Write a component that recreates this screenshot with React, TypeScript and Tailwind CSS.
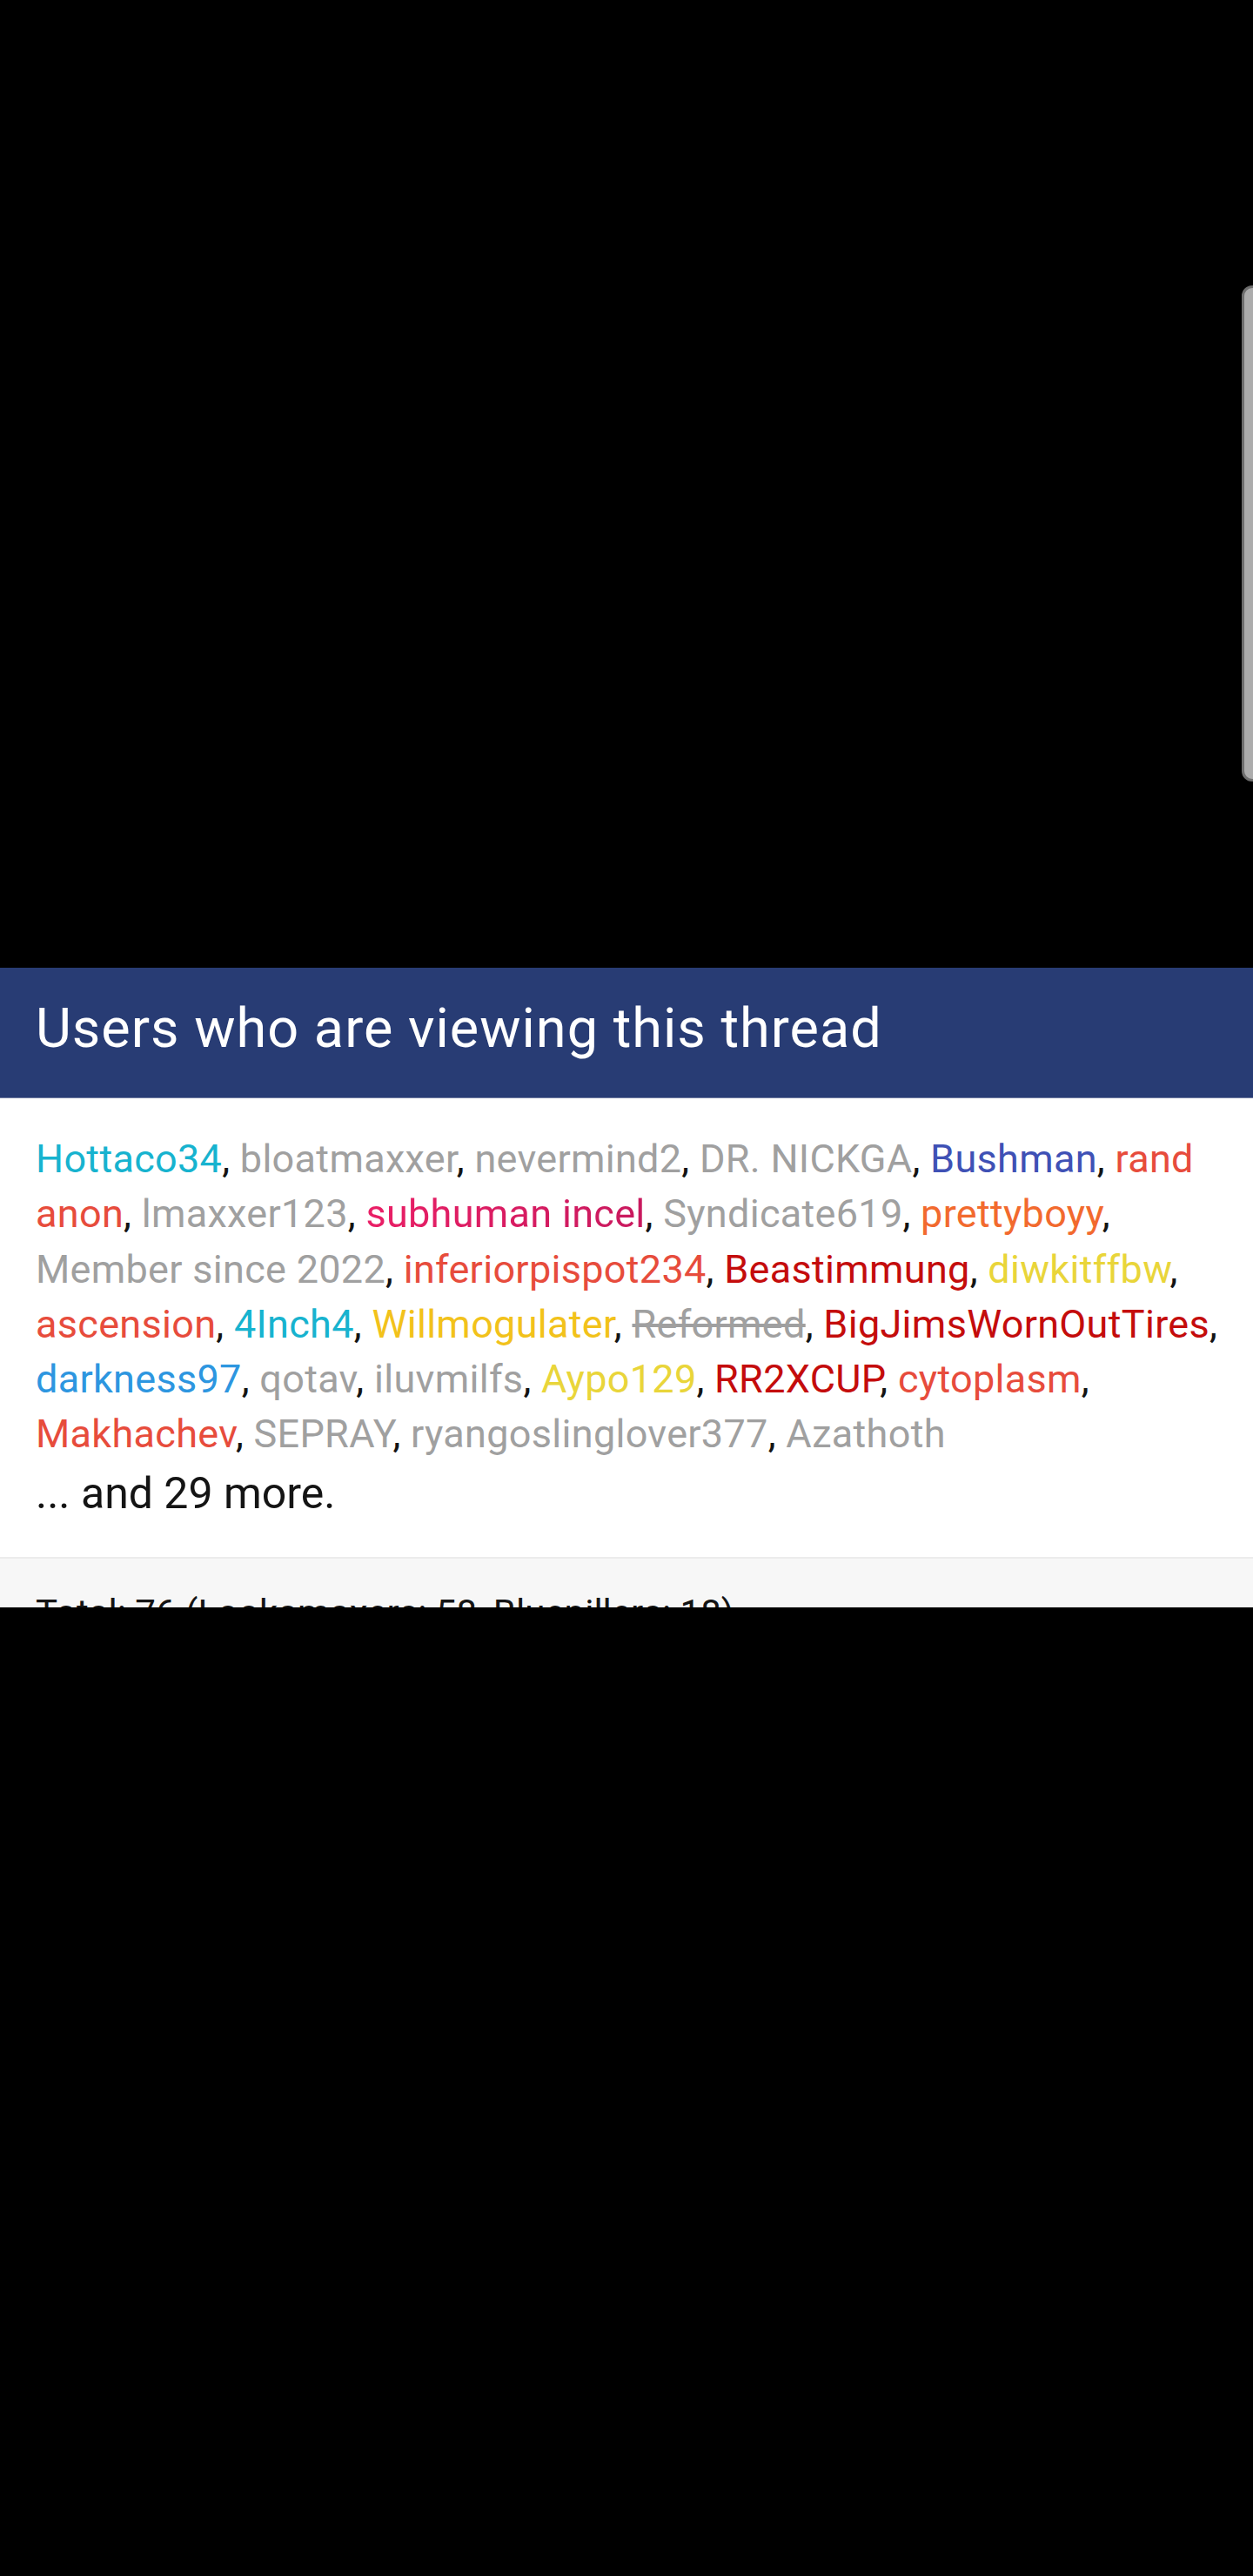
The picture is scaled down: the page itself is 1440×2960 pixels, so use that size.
import React from "react";

type U = { n: string; c: string; s?: boolean; g?: boolean };

const users: U[] = [
  { n: "Hottaco34", c: "text-[#17b3cf]" },
  { n: "bloatmaxxer", c: "text-[#a0a0a0]" },
  { n: "nevermind2", c: "text-[#a0a0a0]" },
  { n: "DR. NICKGA", c: "text-[#a0a0a0]" },
  { n: "Bushman", c: "text-[#3f51b5]" },
  { n: "rand anon", c: "text-[#e74c3c]" },
  { n: "lmaxxer123", c: "text-[#a0a0a0]" },
  { n: "subhuman incel", c: "", g: true },
  { n: "Syndicate619", c: "text-[#a0a0a0]" },
  { n: "prettyboyy", c: "text-[#f26a2e]" },
  { n: "Member since 2022", c: "text-[#a0a0a0]" },
  { n: "inferiorpispot234", c: "text-[#e74c3c]" },
  { n: "Beastimmung", c: "text-[#c40c0c]" },
  { n: "diwkitffbw", c: "text-[#e9d53a]" },
  { n: "ascension", c: "text-[#e74c3c]" },
  { n: "4Inch4", c: "text-[#17b3cf]" },
  { n: "Willmogulater", c: "text-[#f2c21b]" },
  { n: "Reformed", c: "text-[#a0a0a0]", s: true },
  { n: "BigJimsWornOutTires", c: "text-[#c40c0c]" },
  { n: "darkness97", c: "text-[#2d96e0]" },
  { n: "qotav", c: "text-[#a0a0a0]" },
  { n: "iluvmilfs", c: "text-[#a0a0a0]" },
  { n: "Aypo129", c: "text-[#e9d53a]" },
  { n: "RR2XCUP", c: "text-[#c40c0c]" },
  { n: "cytoplasm", c: "text-[#e74c3c]" },
  { n: "Makhachev", c: "text-[#e74c3c]" },
  { n: "SEPRAY", c: "text-[#a0a0a0]" },
  { n: "ryangoslinglover377", c: "text-[#a0a0a0]" },
  { n: "Azathoth", c: "text-[#a0a0a0]" },
];

export default function App() {
  return (
    <div
      className="relative w-[1440px] h-[2960px] bg-black overflow-hidden flex flex-col"
      style={{ fontFamily: "Roboto, 'Noto Sans', sans-serif" }}
    >
      {/* scrollbar overlay */}
      <div className="absolute left-[1427px] top-[328px] w-[20px] h-[570px] rounded-l-[12px] bg-[#acacac] border-[3px] border-[#6e6e6e]" />

      <div className="h-[1112px] shrink-0" />

      <div className="h-[735px] shrink-0 overflow-hidden flex flex-col bg-white">
        <div className="h-[150px] shrink-0 bg-[#283c74] pt-[33px] px-[41px] border-b border-[#6f7ba0]">
          <h2 className="text-[63px] leading-[74px] tracking-[1px] text-white font-normal">
            Users who are viewing this thread
          </h2>
        </div>

        <div className="pt-[38px] pb-[36px] pl-[41px] pr-[28px] bg-white">
          <ul className="text-[45px] leading-[63.3px] tracking-[0.3px] text-[#141414]">
            {users.map((u, i) => (
              <li key={u.n} className="inline">
                <span
                  className={
                    u.g
                      ? "bg-gradient-to-r from-[#ea1f66] to-[#c8195e] bg-clip-text text-transparent"
                      : u.s
                      ? `${u.c} line-through`
                      : u.c
                  }
                >
                  {u.n}
                </span>
                {i < users.length - 1 ? ", " : ""}
              </li>
            ))}
          </ul>
          <div className="text-[50px] leading-[72.8px] text-[#141414]">... and 29 more.</div>
        </div>

        <div className="border-t-2 border-[#ececec] bg-[#f7f7f7] pt-[31px] px-[41px] text-[42px] leading-[63px] text-[#141414]">
          Total: 76 (Lookamaxers: 58, Bluepillers: 18)
        </div>
      </div>

      <div className="flex-1 bg-black" />
    </div>
  );
}
